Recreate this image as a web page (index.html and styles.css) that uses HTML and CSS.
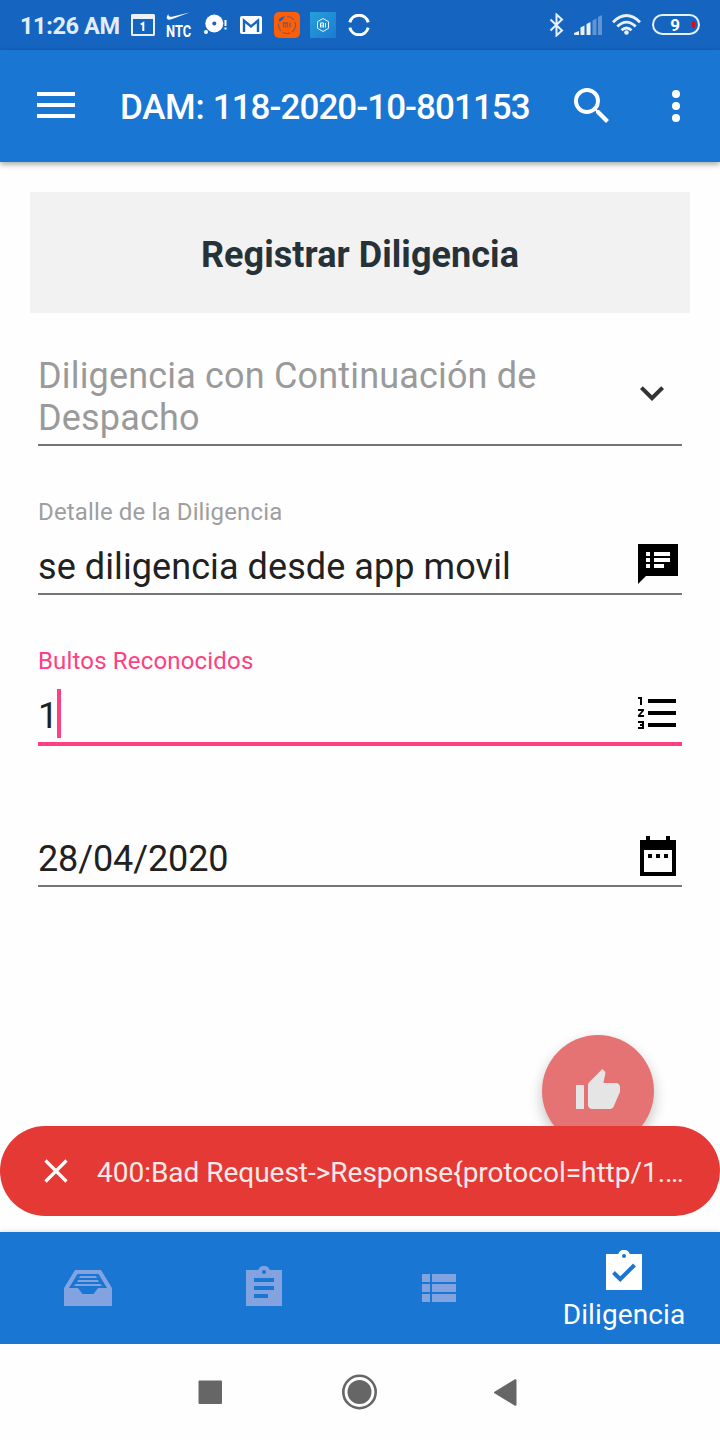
FILE: index.html
```html
<!DOCTYPE html>
<html lang="es">
<head>
<meta charset="utf-8">
<title>Registrar Diligencia</title>
<link rel="stylesheet" href="styles.css">
</head>
<body>
<div class="screen">
  <div class="status">
    <div class="status-group">
      <span class="clock">11:26 AM</span>
      <svg class="cal" width="24" height="22" viewBox="0 0 24 22"><path fill="#eaf1fb" fill-rule="evenodd" d="M1 0h22l1 1v20l-1 1H1l-1-1V1zM2 5v15h20V5z"/><path d="M9.700 10.500l2.600-1.500V17" fill="none" stroke="#fff" stroke-width="2"/></svg>
      <div class="ntc">
        <svg width="24" height="9" viewBox="0 0 24 9"><path fill="#fff" d="M2.500 2C-.5 5.500 0 9 5.500 7.200L23.500.5 7 4.600C3.500 5.300 2 4 2.500 2z"/></svg>
        <span>NTC</span>
      </div>
      <svg class="disc" width="24" height="22" viewBox="0 0 24 22"><circle cx="10.300" cy="9.500" r="9" fill="#fff"/><circle cx="2" cy="18" r="2" fill="#fff"/><circle cx="10.300" cy="9.500" r="2" fill="#1565c0"/><path fill="#fff" d="M20.500 6h2v6h-2zM20.500 13.500h2v2h-2z"/></svg>
      <svg class="mail" width="22" height="18" viewBox="0 0 22 18"><rect width="22" height="18" rx="2" fill="#fff"/><path d="M4 16V4.500l7 6 7-6V16" fill="none" stroke="#1565c0" stroke-width="2.400"/></svg>
      <svg class="mi" width="26" height="26" viewBox="0 0 26 26"><rect width="26" height="26" rx="5" fill="#ff5e05"/><circle cx="13" cy="13" r="8.500" fill="none" stroke="#775b62" stroke-width="1.200" stroke-dasharray="8 2"/><path d="M5.500 8.500l3.500-3" stroke="#1565c0" stroke-width="2.500"/><path d="M9.500 15.500V11h4v4.500M11.500 12.500v3M16 10.500v5" fill="none" stroke="#775b62" stroke-width="1.300"/></svg>
      <svg class="mi-home" width="26" height="26" viewBox="0 0 26 26"><defs><linearGradient id="sky" x2="1" y2="1"><stop stop-color="#26a0da"/><stop offset="1" stop-color="#1b7bd2"/></linearGradient></defs><rect width="26" height="26" fill="url(#sky)"/><path d="M13 6.500l5.500 3.200v6.600L13 19.500l-5.500-3.200V9.700z" fill="none" stroke="#e5f4fc"/><path d="M10.500 15.500V11h3v4.500M12 12.500v3M15.500 11v4.500" fill="none" stroke="#fff"/></svg>
      <svg class="ring" width="22" height="22" viewBox="0 0 22 22"><path d="M1.800 8.300A9.500 9.500 0 0 1 20.200 8.300M1.800 13.700A9.500 9.500 0 0 0 20.200 13.700" fill="none" stroke="#fff" stroke-width="3"/></svg>
    </div>
    <div class="status-group">
      <svg class="bt" width="15" height="24" viewBox="0 0 15 24"><path d="M1.500 6.500l11.500 11-5.500 5V1.500l5.500 5L1.500 17.500" fill="none" stroke="#e8f0fa" stroke-width="2"/></svg>
      <svg class="signal" width="28" height="20" viewBox="0 0 28 20"><g fill="#eaf1fb"><path d="M0 18l5-2v4H1q-1 0-1-1z"/><path d="M6.500 12.500l4-2V20h-4zM12.500 9l4-2v13h-4z"/><path opacity=".35" d="M18.500 5.500l4-2V20h-4zM24 2l4-2v20h-4z"/></g></svg>
      <svg class="wifi" width="29" height="21" viewBox="0 0 29 21"><g fill="none" stroke="#eaf1fb" stroke-width="2.800"><path d="M1 8.200Q14.500-5 28 8.200M5.300 12.500q9.200-8.800 18.400 0M9.500 16.300q5-4.500 10 0"/></g><circle cx="14.500" cy="18.500" r="2.300" fill="#eaf1fb"/></svg>
      <div class="battery"><span>9</span><i></i></div>
    </div>
  </div>

  <header class="appbar">
    <svg class="menu" width="38" height="26" viewBox="0 0 38 26"><path fill="#fff" d="M0 0h38v4H0zM0 11h38v4H0zM0 22h38v4H0z"/></svg>
    <h1>DAM: <span class="number">118-2020-10-801153</span></h1>
    <svg class="search" width="48" height="48" viewBox="0 0 24 24"><path fill="#fff" d="M15.500 14h-.79l-.28-.27A6.471 6.471 0 0 0 16 9.500 6.500 6.500 0 1 0 9.500 16c1.610 0 3.090-.59 4.230-1.570l.27.28v.79l5 4.990L20.490 19l-4.990-5zm-6 0C7.010 14 5 11.990 5 9.500S7.010 5 9.500 5 14 7.010 14 9.500 11.990 14 9.500 14z"/></svg>
    <svg class="more" width="8" height="32" viewBox="0 0 8 32"><g fill="#fff"><circle cx="4" cy="4" r="4"/><circle cx="4" cy="16" r="4"/><circle cx="4" cy="28" r="4"/></g></svg>
  </header>

  <main class="content">
    <h2>Registrar Diligencia</h2>
    <div class="field select">
      <div class="row">
        <p class="value muted">Diligencia con Continuación de<br>Despacho</p>
        <svg width="48" height="48" viewBox="0 0 24 24"><path fill="#333" d="M16.590 8.590L12 13.170 7.410 8.590 6 10l6 6 6-6z"/></svg>
      </div>
    </div>
    <div class="field detail">
      <label>Detalle de la Diligencia</label>
      <div class="row">
        <p class="value">se diligencia desde app movil</p>
        <svg width="48" height="48" viewBox="0 0 24 24"><path d="M22 2H2v20l4-4h16zM8 14H6v-2h2zm0-3H6V9h2zm0-3H6V6h2zm7 6h-5v-2h5zm3-3h-8V9h8zm0-3h-8V6h8z"/></svg>
      </div>
    </div>
    <div class="field count">
      <label>Bultos Reconocidos</label>
      <div class="row">
        <p class="value">1<span class="caret"></span></p>
        <svg width="48" height="48" viewBox="0 0 24 24"><path d="M2 17h2v.5H3v1h1v.5H2v1h3v-4H2zm1-9h1V4H2v1h1zm-1 3h1.800L2 13.100v.9h3v-1H3.200L5 10.900V10H2zm5-6v2h14V5zm0 14h14v-2H7zm0-6h14v-2H7z"/></svg>
      </div>
    </div>
    <div class="field date">
      <div class="row">
        <p class="value">28/04/2020</p>
        <svg width="48" height="48" viewBox="0 0 24 24"><path fill-rule="evenodd" d="M6 2h2v2h8V2h2v2h3v18H3V4h3zM5 9v11h14V9zM7 11h2v2H7zM11 11h2v2h-2zM15 11h2v2h-2z"/></svg>
      </div>
    </div>
    <div class="fab">
      <svg width="48" height="48" viewBox="0 0 24 24"><path fill="#e5e5e5" d="M1 21h4V9H1v12zm22-11c0-1.100-.9-2-2-2h-6.310l.95-4.570.03-.32c0-.41-.17-.79-.44-1.060L14.170 1 7.590 7.590C7.220 7.950 7 8.450 7 9v10c0 1.100.9 2 2 2h9c.83 0 1.540-.5 1.840-1.220l3.020-7.050c.09-.23.14-.47.14-.73v-2z"/></svg>
    </div>
  </main>

  <div class="snackbar">
    <svg width="24" height="24" viewBox="0 0 24 24"><path d="M1.500 1.500l21 21M22.500 1.500l-21 21" stroke="#fff" stroke-width="3.200"/></svg>
    <span>400:Bad Request-&gt;Response{protocol=http/1.…</span>
  </div>

  <nav class="tabs">
    <div class="tab"><svg width="48" height="36" viewBox="0 0 48 36"><path fill="#82a3df" fill-rule="evenodd" d="M11 0h26l11 18v18H0V18zM13.500 4L5 18h9l4.500 6h11l4.500-6h9L34.500 4z"/><path fill="#82a3df" d="M16 6h16l1 2H15zM14 10h20l1 2H13zM11.500 14h25l1.500 2H10z"/></svg></div>
    <div class="tab"><svg class="clip" width="36" height="40" viewBox="0 0 36 40"><path fill="#82a3df" fill-rule="evenodd" d="M0 4h12.300a6 6 0 0 1 11.400 0H36v36H0zM18 4a2 2 0 1 0 0 4 2 2 0 0 0 0-4zM8 12v4h20v-4zM8 20v4h20v-4zM8 28v4h14v-4z"/></svg></div>
    <div class="tab"><svg width="34" height="28" viewBox="0 0 34 28"><path fill="#82a3df" d="M0 0h8v8H0zM10 0h24v8H10zM0 10h8v8H0zM10 10h24v8H10zM0 20h8v8H0zM10 20h24v8H10z"/></svg></div>
    <div class="tab active">
      <svg width="36" height="40" viewBox="0 0 36 40"><path fill="#fff" fill-rule="evenodd" d="M0 4h12.300a6 6 0 0 1 11.400 0H36v36H0zM18 4a2 2 0 1 0 0 4 2 2 0 0 0 0-4z"/><path d="M7.500 22.500l6.700 6.700L28.500 15" fill="none" stroke="#1976d2" stroke-width="4"/></svg>
      <span>Diligencia</span>
    </div>
  </nav>

  <div class="sysnav">
    <svg class="recent" width="24" height="24" viewBox="0 0 24 24"><rect x=".5" y=".5" width="23.500" height="23.500" rx="1" fill="#666"/></svg>
    <svg class="home" width="36" height="36" viewBox="0 0 36 36"><circle cx="17.500" cy="18" r="16.200" fill="none" stroke="#666" stroke-width="2.600"/><circle cx="17.500" cy="18" r="12" fill="#666"/></svg>
    <svg class="back" width="23" height="27" viewBox="0 0 23 27"><path d="M1 13.500L21.500 1.200V25.800z" fill="#666" stroke="#666" stroke-width="2" stroke-linejoin="round"/></svg>
  </div>
</div>
</body>
</html>
```
FILE: styles.css
```css
* { box-sizing: border-box; }
body { margin: 0; font-family: Roboto, "Liberation Sans", sans-serif; background: #fefefe; }
h1, h2, p { margin: 0; }
svg { display: block; flex: none; }
.screen { width: 720px; height: 1440px; display: flex; flex-direction: column; overflow: hidden; }

.status { height: 50px; flex: none; background: #1565c0; display: flex; justify-content: space-between; padding: 0 20px 0 20px; }
.status-group { display: flex; align-items: flex-start; }
.clock { width: 111px; padding-top: 12px; font-size: 23.5px; line-height: 28px; font-weight: 700; letter-spacing: -.4px; color: #e3edf9; white-space: nowrap; }
.cal { margin-top: 14px; }
.ntc { width: 26px; margin: 12px 0 0 11px; }
.ntc span { display: block; font-family: Roboto, sans-serif; font-size: 16.5px; line-height: 19px; font-weight: 700; color: #fff; transform: scaleX(.78); transform-origin: left; margin-top: 1px; width: 34px; }
.disc { margin: 14px 0 0 12px; }
.mail { margin: 16px 0 0 12px; }
.mi { margin: 12px 0 0 12px; }
.mi-home { margin: 12px 0 0 10px; }
.ring { margin: 14px 0 0 12px; }
.bt { margin-top: 13px; }
.signal { margin: 15px 0 0 10px; }
.wifi { margin: 14px 0 0 10px; }
.battery { margin: 14px 0 0 11px; width: 48px; height: 21px; border: 2px solid #e8f0fa; border-radius: 11px; display: flex; align-items: center; justify-content: flex-end; color: #fff; font-size: 17px; font-weight: 700; gap: 12px; padding-right: 3px; }
.battery i { width: 3px; height: 7px; background: #d50d1d; }

.appbar { height: 112px; flex: none; background: #1976d2; box-shadow: 0 2px 6px rgba(0,0,0,.38); display: flex; align-items: center; padding: 0 40px 0 37px; position: relative; }
.menu { margin-top: -2px; }
.appbar h1 { margin: 4px 0 0 45px; width: 448px; font-size: 35px; line-height: 42px; font-weight: 500; letter-spacing: -.3px; color: #fff; white-space: nowrap; }
.number { letter-spacing: -.95px; }
.more { margin: -1px 0 0 56px; }

.content { height: 964px; flex: none; padding: 30px 30px 0; position: relative; }
.content h2 { height: 121px; background: #f2f2f2; color: #263238; font-size: 36px; line-height: 127px; font-weight: 700; letter-spacing: .05px; text-align: center; }
.field { margin: 0 8px; border-bottom: 2px solid #757575; }
.row { display: flex; justify-content: space-between; align-items: flex-start; }
.value { font-size: 36px; line-height: 42px; color: #212121; white-space: nowrap; }
.muted { color: #9a9a9a; letter-spacing: .17px; }
.field label { display: block; font-size: 24px; line-height: 28px; letter-spacing: .14px; color: #9e9e9e; }
.select { height: 133px; padding-top: 42px; }
.select svg { margin: 14px 6px 0 0; }
.detail { height: 149px; padding-top: 52px; }
.detail .value { padding-top: 20px; letter-spacing: .08px; }
.detail svg { margin: 14px 0 0; }
.count { height: 151px; padding-top: 52px; border-bottom: 4px solid #ff4081; }
.count label { color: #ff4081; letter-spacing: .17px; }
.count .value { padding-top: 20px; display: flex; }
.count svg { margin-top: 14px; }
.caret { width: 4px; height: 49px; margin: -6px 0 -7px -1px; background: #ff4081; }
.date { height: 141px; padding-top: 86px; }
.date .value { padding-top: 6px; letter-spacing: -.12px; }
.fab { position: absolute; left: 542px; top: 873px; width: 112px; height: 112px; border-radius: 50%; background: #e57373; display: flex; align-items: center; justify-content: center; box-shadow: 0 6px 14px rgba(0,0,0,.24); }

.snackbar { height: 90px; flex: none; margin-bottom: 16px; border-radius: 45px; background: #e53935; position: relative; display: flex; align-items: center; padding: 0 20px 0 44px; gap: 29px; font-size: 28px; line-height: 34px; letter-spacing: -.02px; color: #f9eaea; white-space: nowrap; }
.snackbar span { padding-top: 3px; }

.tabs { height: 112px; flex: none; background: #1976d2; display: flex; box-shadow: 0 0 6px rgba(0,0,0,.14); }
.tab { width: 176px; flex: none; display: flex; justify-content: center; align-items: center; }
.tab .clip { margin-top: -4px; }
.tab:nth-child(3) { width: 174px; }
.active { width: 196px; flex-direction: column; justify-content: flex-start; padding-top: 18px; color: #fff; font-size: 28px; line-height: 34px; }
.active span { margin-top: 8px; letter-spacing: .1px; }

.sysnav { height: 96px; display: flex; align-items: center; padding-left: 198px; background: #fefefe; position: relative; }
.home { margin-left: 120px; }
.back { margin-left: 116px; }
```
